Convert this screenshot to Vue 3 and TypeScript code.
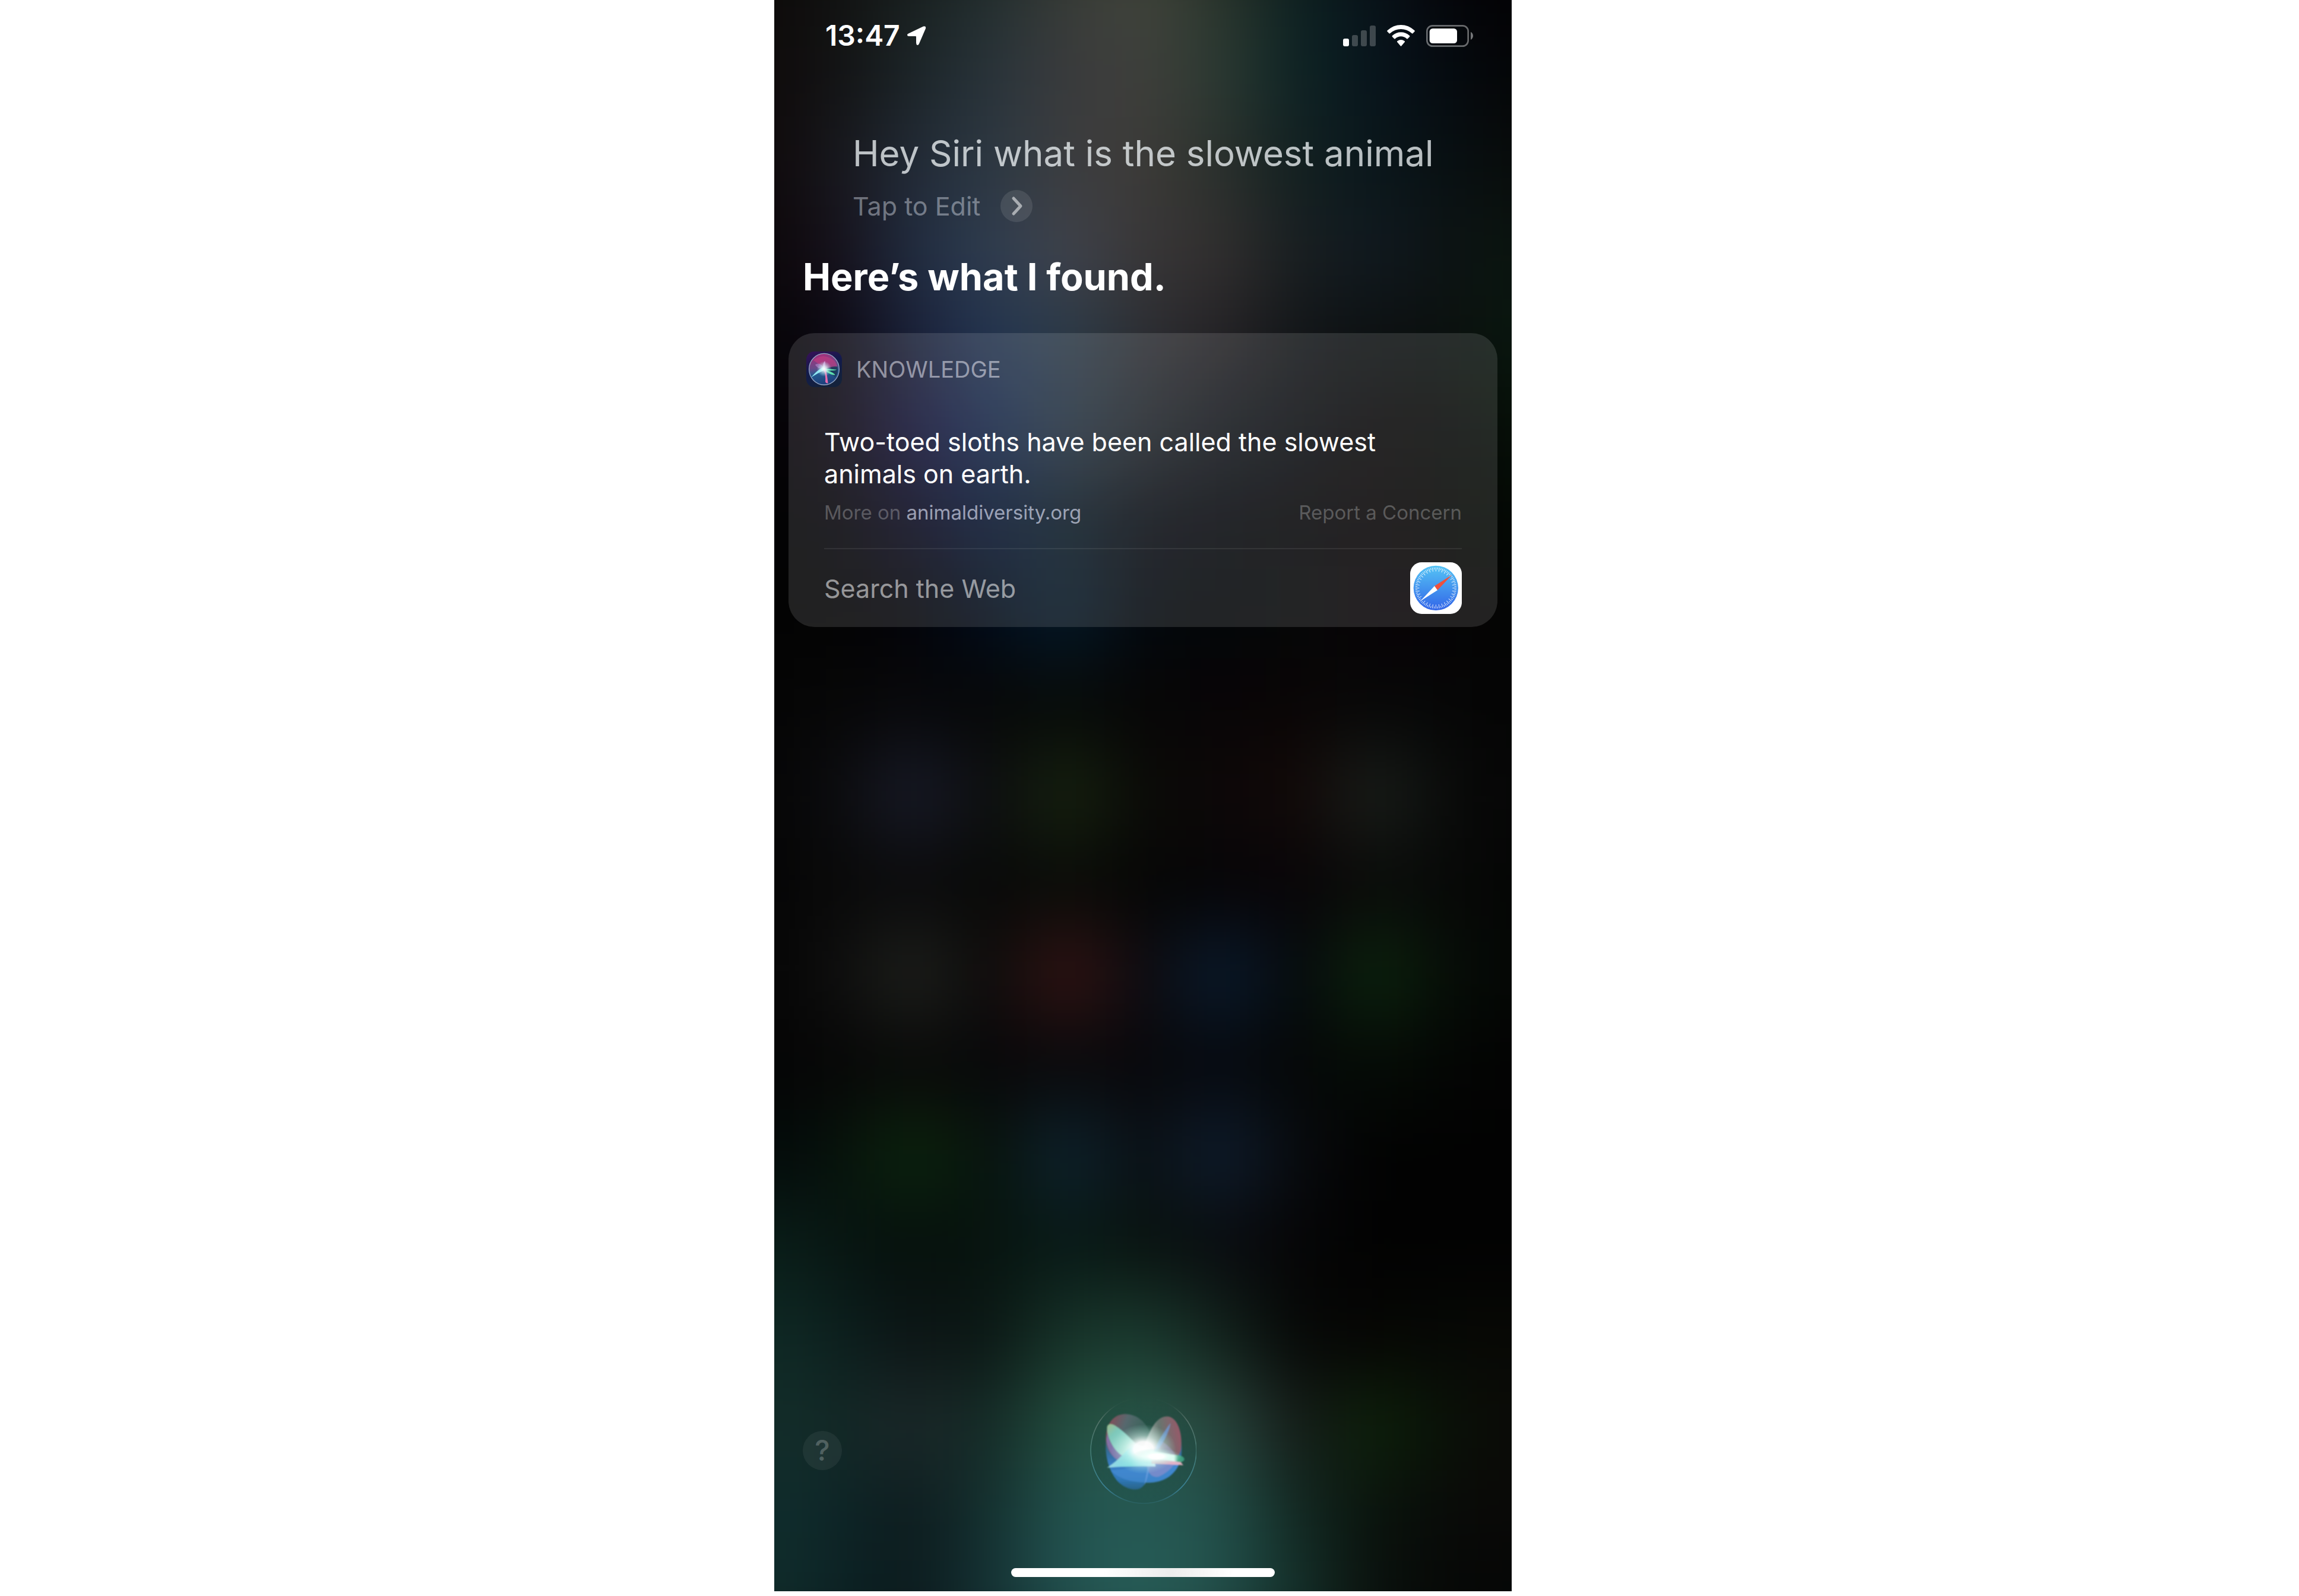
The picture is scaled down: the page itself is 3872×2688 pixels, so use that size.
<script setup lang="ts">
interface Cell {
  key: string
  x: number
  y: number
  fill: string
}

interface Tick {
  angle: number
  long: boolean
}

// Colours of the blurred home screen, sampled on an even grid.
const wallpaper: string[] = [
  '0c0a09 111110 19201f 222e2e 383c37 42463c 2a342b 0d2121 081219 050408 020103',
  '0f0a0a 121213 1b2427 28333a 3a3b3d 3f3f3b 2b3a32 0d2324 08141d 050a0f 040405',
  '0e0809 17171c 222a36 2c3843 3c3d3f 3d3b38 2a302c 122021 0a171b 080f12 080b09',
  '0b0609 161019 202c41 2f3d50 40434c 383637 322f2f 181e20 101920 0d1313 0a160f',
  '060407 0b0811 1a2038 223451 2b3b48 2c2d32 242225 121518 0c1011 0b100e 08180e',
  '030103 0a050e 131038 13264a 243240 1f2429 12161c 0b0e12 0a0708 050806 061108',
  '020203 030306 07061c 041330 0a1a24 080b12 05070c 050507 060304 040503 030904',
  '020202 030303 030308 010b1a 051a2a 03070c 030609 050707 080306 050304 040604',
  '040404 070707 08080b 060808 080b09 060606 080506 0a0505 070808 060606 040404',
  '050506 0b0b0d 191c2a 0c0d0f 17240f 0a0a08 0d0808 120908 1a1f1b 090a09 050505',
  '040404 090909 0b0b0c 080908 0a0c09 060605 060507 090508 0a0c0a 070807 040404',
  '050505 0d0d0d 1f211d 0c0b0b 361414 0c0b0f 0a1c30 06090c 0c260e 060c07 040604',
  '040404 070707 090a09 08080a 0a090b 08080b 060a10 050707 050c06 040504 020202',
  '03090a 06110b 0c260e 07120c 0f2430 0a0f13 0f1e30 080a0d 020202 020202 010101',
  '0a201a 081613 050f0b 07140f 081a17 09130f 0a0c10 050506 020202 020202 020202',
  '102c27 0c201e 0c1415 0b1714 173329 1b3a2f 12221c 060706 060604 060805 080805',
  '14302c 122826 1c2829 142a26 245040 29594a 2b473f 141a17 0d220a 0a1008 0c0a06',
  '11302f 0d2527 0d1b1e 14302f 235350 255954 22504a 122822 0a120c 080a08 0a0806',
  '11302e 0c2224 0c1a1d 143235 235250 28605a 234f4b 14302a 0a100c 050706 040505',
]

const stepX = 130
const stepY = 152
const cells: Cell[] = wallpaper.flatMap((line, row) =>
  line.split(' ').map((hex, col) => ({
    key: `${row}-${col}`,
    x: col * stepX - 93,
    y: row * stepY - 108,
    fill: `#${hex}`,
  })),
)

const ticks: Tick[] = Array.from({ length: 72 }, (_, i) => ({ angle: i * 5, long: i % 2 === 0 }))
</script>

<template>
  <div class="page">
    <main class="phone">
      <svg class="wallpaper" viewBox="0 0 1242 2680" preserveAspectRatio="none" aria-hidden="true">
        <defs>
          <filter id="soften" filterUnits="userSpaceOnUse" x="-100" y="-120" width="1450" height="2920" color-interpolation-filters="sRGB">
            <feGaussianBlur stdDeviation="62" />
          </filter>
        </defs>
        <rect width="1242" height="2680" fill="#050505" />
        <g filter="url(#soften)">
          <rect x="-400" y="-400" width="2100" height="3500" fill="#080808" />
          <rect v-for="c in cells" :key="c.key" :x="c.x" :y="c.y" :width="stepX + 1" :height="stepY + 1" :fill="c.fill" />
        </g>
      </svg>

      <header class="status">
        <div class="clock">
          <span>13:47</span>
          <svg class="arrow" viewBox="0 0 32 32" aria-hidden="true">
            <path d="M2 12.500 27 .5Q32-1 31 4L20 29.500Q19 32 17 32 15 31 15 28V18Q15 17 14 17H3Q0 17 0 14.500 0 13.500 2 12.500Z" fill="#fff" />
          </svg>
        </div>
        <div class="indicators">
          <svg class="signal" viewBox="0 0 55 36" aria-hidden="true">
            <rect x="0" y="23" width="10" height="13" rx="3" fill="#fff" />
            <rect x="15" y="17" width="10" height="19" rx="3" fill="#fff" opacity=".22" />
            <rect x="30" y="9" width="10" height="27" rx="3" fill="#fff" opacity=".22" />
            <rect x="45" y="1" width="10" height="35" rx="3" fill="#fff" opacity=".22" />
          </svg>
          <svg class="wifi" viewBox="0 0 141 108" aria-hidden="true">
            <path d="M2 28Q32 0 70.500 0T139 28Q142 31 139 34L131 42Q128 45 125 42 101 21 70.500 21T16 42Q13 45 10 42L2 34Q-1 31 2 28Z" fill="#fff" />
            <path d="M27 54Q46 37 70.500 37T114 54Q117 57 114 60L105 69Q102 72 99 69 86 58 70.500 58T42 69Q39 72 36 69L27 60Q24 57 27 54Z" fill="#fff" />
            <path d="M53 81Q61 75 70.500 75T88 81Q92 84 89 87L73 106Q70.500 109 68 106L52 87Q49 84 53 81Z" fill="#fff" />
          </svg>
          <svg class="battery" viewBox="0 0 237 111" aria-hidden="true">
            <rect x="4" y="4" width="208" height="103" rx="28" fill="none" stroke="#fff" stroke-opacity=".4" stroke-width="8" />
            <rect x="17" y="18" width="139" height="75" rx="16" fill="#fff" />
            <path d="M225 35Q237 42 237 55T225 75Z" fill="#fff" fill-opacity=".45" />
          </svg>
        </div>
      </header>

      <section class="request">
        <p class="query">Hey Siri what is the slowest animal</p>
        <button class="edit" type="button">
          <span>Tap to Edit</span>
          <svg viewBox="0 0 54 54" aria-hidden="true">
            <circle cx="27" cy="27" r="27" fill="#fff" fill-opacity=".1" />
            <path d="M22 14 34 27 22 40" fill="none" stroke="#a9adb2" stroke-width="5" stroke-linecap="round" stroke-linejoin="round" />
          </svg>
        </button>
      </section>

      <h1 class="answer">Here’s what I found.</h1>

      <article class="card">
        <div class="source">
          <svg class="app" viewBox="25 35 182 175" preserveAspectRatio="none" aria-hidden="true">
            <defs>
              <linearGradient id="tile" x1="0" y1="0" x2=".4" y2="1">
                <stop offset="0" stop-color="#3a1058" />
                <stop offset=".5" stop-color="#121a4c" />
                <stop offset="1" stop-color="#14223c" />
              </linearGradient>
              <linearGradient id="disc" x1=".4" y1="0" x2=".6" y2="1">
                <stop offset="0" stop-color="#a5307c" />
                <stop offset=".4" stop-color="#6a4a88" />
                <stop offset=".62" stop-color="#255a90" />
                <stop offset="1" stop-color="#1c3b78" />
              </linearGradient>
              <radialGradient id="spark">
                <stop offset="0" stop-color="#fff" />
                <stop offset=".3" stop-color="#e8ffff" stop-opacity=".8" />
                <stop offset="1" stop-color="#9fe8f0" stop-opacity="0" />
              </radialGradient>
            </defs>
            <rect x="25" y="35" width="182" height="175" rx="40" fill="url(#tile)" />
            <circle cx="116" cy="122" r="77" fill="url(#disc)" stroke="#93a6c4" stroke-width="4" />
            <path d="M62 78Q110 38 168 80 178 92 184 108L118 118Z" fill="#c93a80" opacity=".6" />
            <path d="M120 122Q160 104 184 110 190 140 172 160Z" fill="#17304a" opacity=".7" />
            <path d="M70 100Q96 84 118 120 84 124 70 100Z" fill="#b58ad0" opacity=".6" />
            <path d="M120 80Q104 98 112 122 128 108 120 80Z" fill="#e0a0e0" opacity=".75" />
            <path d="M50 162Q78 128 110 112L122 124Q86 140 50 162Z" fill="#8fe6f2" />
            <path d="M112 118Q160 122 180 124 172 130 130 128 168 138 172 151 150 152 116 126Z" fill="#5fe0ae" />
            <path d="M112 120 126 124Q132 158 136 190 126 194 122 184 126 152 112 120Z" fill="#e86cae" />
            <circle cx="116" cy="120" r="38" fill="url(#spark)" />
          </svg>
          <h2>KNOWLEDGE</h2>
        </div>
        <div class="body">
          <p class="fact">Two-toed sloths have been called the slowest animals on earth.</p>
          <div class="links">
            <span>More on <a href="#animaldiversity">animaldiversity.org</a></span>
            <a class="report" href="#report">Report a Concern</a>
          </div>
          <a class="search" href="#search">
            <span>Search the Web</span>
            <svg class="safari" viewBox="0 0 261 261" aria-hidden="true">
              <defs>
                <linearGradient id="sky" x1="0" y1="0" x2="0" y2="1">
                  <stop offset="0" stop-color="#55c4f5" />
                  <stop offset="1" stop-color="#3265e8" />
                </linearGradient>
              </defs>
              <rect width="261" height="261" rx="58" fill="#fff" />
              <circle cx="130" cy="130" r="113" fill="url(#sky)" />
              <line
                v-for="t in ticks"
                :key="t.angle"
                x1="130"
                y1="26"
                x2="130"
                :y2="t.long ? 46 : 36"
                stroke="#fff"
                stroke-width="3"
                stroke-opacity=".85"
                :transform="`rotate(${t.angle} 130 130)`"
              />
              <path d="M212 63 123 120 138 141Z" fill="#f0503c" />
              <path d="M52 196 123 120 138 141Z" fill="#fff" />
            </svg>
          </a>
        </div>
      </article>

      <footer class="dock">
        <button class="help" type="button" aria-label="Help">?</button>
        <button class="siri" type="button" aria-label="Siri">
          <svg viewBox="168 106 538 538" aria-hidden="true">
            <defs>
              <linearGradient id="ring" x1="0" y1="0" x2="0" y2="1">
                <stop offset="0" stop-color="#7fa898" stop-opacity="0" />
                <stop offset=".08" stop-color="#8a9a94" stop-opacity=".05" />
                <stop offset=".22" stop-color="#8a9a94" stop-opacity=".45" />
                <stop offset=".5" stop-color="#5a9a94" stop-opacity=".55" />
                <stop offset=".85" stop-color="#3f8ca8" stop-opacity=".8" />
                <stop offset="1" stop-color="#3f86a0" stop-opacity=".2" />
              </linearGradient>
              <linearGradient id="inside" x1="0" y1="0" x2="0" y2="1">
                <stop offset="0" stop-color="#1e4a42" stop-opacity="0" />
                <stop offset=".4" stop-color="#1e4a42" stop-opacity=".4" />
                <stop offset="1" stop-color="#1e4f4a" stop-opacity=".3" />
              </linearGradient>
              <filter id="haze" x="-10%" y="-10%" width="120%" height="120%">
                <feGaussianBlur stdDeviation="3" />
              </filter>
              <linearGradient id="ocean" x1="0" y1="0" x2="0" y2="1">
                <stop offset="0" stop-color="#3b6fa8" stop-opacity=".5" />
                <stop offset=".5" stop-color="#3a80c8" />
                <stop offset=".8" stop-color="#2f78b8" />
                <stop offset="1" stop-color="#2b6a98" stop-opacity=".8" />
              </linearGradient>
              <linearGradient id="roseLeft" x1="0" y1=".2" x2="1" y2=".6">
                <stop offset="0" stop-color="#8c4a55" />
                <stop offset=".35" stop-color="#5c6a72" stop-opacity=".9" />
                <stop offset="1" stop-color="#4c7c70" stop-opacity=".2" />
              </linearGradient>
              <linearGradient id="roseRight" x1="0" y1=".6" x2="1" y2=".4">
                <stop offset="0" stop-color="#c8ccc8" />
                <stop offset=".5" stop-color="#66766f" />
                <stop offset="1" stop-color="#98586a" />
              </linearGradient>
              <linearGradient id="mint" x1="0" y1="0" x2="1" y2="1">
                <stop offset="0" stop-color="#a5c890" />
                <stop offset=".25" stop-color="#7fd4c4" />
                <stop offset="1" stop-color="#dffff8" />
              </linearGradient>
              <linearGradient id="wing" x1="0" y1="0" x2="1" y2="0">
                <stop offset="0" stop-color="#9fdce6" />
                <stop offset=".5" stop-color="#7fe0e4" />
                <stop offset="1" stop-color="#d8f4ff" />
              </linearGradient>
              <linearGradient id="blade" x1="0" y1="0" x2="1" y2="0">
                <stop offset="0" stop-color="#fff" />
                <stop offset=".7" stop-color="#e6fff6" />
                <stop offset=".82" stop-color="#4cac8c" />
                <stop offset="1" stop-color="#3a9478" />
              </linearGradient>
              <radialGradient id="core">
                <stop offset="0" stop-color="#fff" />
                <stop offset=".3" stop-color="#fff" stop-opacity=".95" />
                <stop offset=".55" stop-color="#e0fff6" stop-opacity=".5" />
                <stop offset="1" stop-color="#a8e8d8" stop-opacity="0" />
              </radialGradient>
            </defs>
            <circle cx="440" cy="375" r="266" fill="url(#inside)" stroke="url(#ring)" stroke-width="5" />
            <g filter="url(#haze)">
              <path d="M250 325C245 400 262 470 305 525 335 558 370 573 405 571 430 568 442 550 450 537 540 540 600 500 624 430 634 395 634 370 630 330L440 380Z" fill="url(#ocean)" />
              <path d="M275 475C320 525 400 535 460 537 550 537 600 490 622 435L500 440 450 455Z" fill="#4a90d8" opacity=".55" />
              <path d="M250 325C248 250 280 192 350 191 425 195 470 250 490 340L420 440C350 440 262 430 250 325Z" fill="url(#roseLeft)" />
              <path d="M253 320C258 370 280 410 320 430L350 405C300 380 268 340 258 290Z" fill="#8a78b8" opacity=".8" />
              <path d="M425 385C460 330 480 205 558 203 620 205 638 310 628 370 622 395 610 410 590 405L480 400Z" fill="url(#roseRight)" />
              <path d="M530 325Q590 370 610 412 590 470 520 505 470 520 455 450L480 385Z" fill="#a890c8" opacity=".5" />
              <path d="M256 262C256 240 275 236 300 252 340 278 370 310 430 370L335 402C290 375 256 310 256 262Z" fill="url(#mint)" opacity=".9" />
              <path d="M576 236Q560 320 488 400L470 455Q462 510 445 550 455 480 468 430 500 340 576 236Z" fill="#6ea0e0" opacity=".75" />
              <path d="M256 461C325 420 350 370 400 340L490 375 500 455Q370 452 256 461Z" fill="url(#wing)" opacity=".95" />
              <path d="M480 400 600 400 640 449 480 440Z" fill="#f2b8c8" opacity=".9" />
              <path d="M470 378Q560 392 620 400 650 406 644 424 636 436 612 432L480 412Z" fill="url(#blade)" />
            </g>
            <ellipse cx="440" cy="368" rx="165" ry="125" fill="url(#core)" />
            <ellipse cx="505" cy="405" rx="125" ry="42" fill="url(#core)" />
          </svg>
        </button>
      </footer>
      <div class="home"></div>
    </main>
  </div>
</template>

<style>
body {
  margin: 0;
  background: #fff;
}
</style>

<style scoped>
.page {
  display: flex;
  justify-content: center;
  padding: 0 22px 8px 0;
  font-family: Inter, "Liberation Sans", sans-serif;
}
.phone {
  position: relative;
  display: flex;
  flex-direction: column;
  box-sizing: border-box;
  width: 100%;
  max-width: 1242px;
  min-height: calc(100vh - 8px);
  overflow: hidden;
  color: #fff;
  background: #050505;
}
.phone > * {
  position: relative;
}
.phone > .wallpaper {
  position: absolute;
  inset: 0;
  width: 100%;
  height: 100%;
}
p,
h1,
h2 {
  margin: 0;
}
a {
  color: inherit;
  text-decoration: none;
}
button {
  padding: 0;
  border: 0;
  background: none;
  font: inherit;
  color: inherit;
}
svg {
  display: block;
}
.status {
  display: flex;
  align-items: center;
  justify-content: space-between;
  height: 120px;
  padding: 0 65px 0 86px;
}
.clock {
  display: flex;
  align-items: center;
  gap: 12px;
  font-size: 48px;
  font-weight: 600;
  line-height: 56px;
}
.arrow {
  width: 32px;
  height: 32px;
}
.indicators {
  display: flex;
  align-items: center;
  gap: 19px;
}
.signal {
  width: 55px;
  height: 36px;
}
.wifi {
  width: 47px;
  height: 36px;
}
.battery {
  width: 79px;
  height: 37px;
}
.request {
  padding: 98px 40px 0 132px;
}
.query {
  font-size: 60px;
  line-height: 80px;
  color: rgba(235, 240, 242, 0.78);
}
.edit {
  display: flex;
  align-items: center;
  gap: 34px;
  margin-top: 22px;
  font-size: 43px;
  line-height: 54px;
  color: rgba(220, 225, 235, 0.45);
}
.edit svg {
  width: 54px;
  height: 54px;
}
.answer {
  padding: 52px 48px 0;
  font-size: 63px;
  font-weight: 700;
  line-height: 80px;
}
.card {
  margin: 55px 24px 0;
  border-radius: 44px;
  background: rgba(255, 255, 255, 0.12);
}
.source {
  display: flex;
  align-items: center;
  gap: 24px;
  padding: 30px 30px 0;
}
.app {
  width: 60px;
  height: 60px;
}
.source h2 {
  font-size: 38px;
  font-weight: 400;
  line-height: 62px;
  color: rgba(235, 235, 245, 0.55);
}
.body {
  padding: 64px 60px 0;
}
.fact {
  font-size: 43px;
  line-height: 54px;
}
.links {
  display: flex;
  justify-content: space-between;
  padding: 18px 0 40px;
  font-size: 33px;
  line-height: 40px;
  color: rgba(255, 255, 255, 0.26);
}
.links span a {
  color: rgba(225, 230, 250, 0.64);
}
.search {
  display: flex;
  align-items: center;
  justify-content: space-between;
  padding: 22px 0;
  border-top: 2px solid rgba(255, 255, 255, 0.08);
  font-size: 43px;
  line-height: 54px;
  color: rgba(255, 255, 255, 0.55);
}
.safari {
  width: 87px;
  height: 87px;
}
.dock {
  display: grid;
  grid-template-columns: 1fr auto 1fr;
  align-items: center;
  margin-top: auto;
  padding: 0 48px;
}
.help {
  width: 66px;
  height: 66px;
  border-radius: 50%;
  background: rgba(255, 255, 255, 0.06);
  font-size: 48px;
  font-weight: 500;
  line-height: 66px;
  color: rgba(255, 255, 255, 0.24);
}
.siri svg {
  width: 180px;
  height: 180px;
}
.home {
  align-self: center;
  width: 444px;
  height: 15px;
  margin: 108px 0 24px;
  border-radius: 8px;
  background: linear-gradient(90deg, #fff 35%, #ececec 60%, #fff 85%);
}
</style>
